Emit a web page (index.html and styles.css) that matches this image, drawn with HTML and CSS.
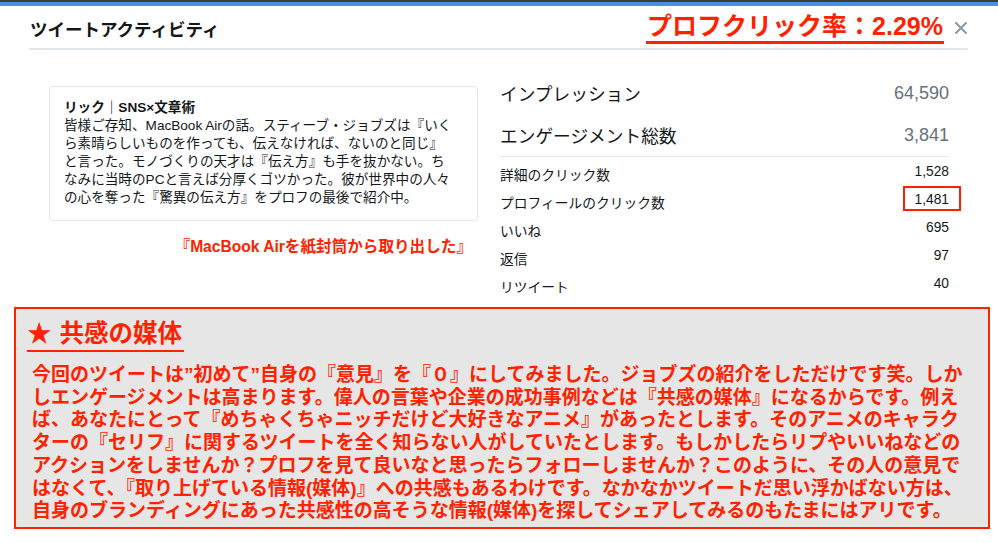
FILE: index.html
```html
<!DOCTYPE html>
<html lang="ja">
<head>
<meta charset="utf-8">
<title>ツイートアクティビティ</title>
<link rel="stylesheet" href="styles.css">
</head>
<body>
<div class="topbar"></div>
<div class="bluebar"></div>
<div class="modal">
  <div class="header">
    <h1 class="title">ツイートアクティビティ</h1>
    <div class="rate">プロフクリック率：2.29%</div>
    <svg class="close" width="12" height="12" viewBox="0 0 12 12"><path d="M1 1 L11 11 M11 1 L1 11" stroke="#8899a6" stroke-width="2" stroke-linecap="square"/></svg>
  </div>
  <div class="content">
    <div class="left">
      <div class="card">
        <div class="card-title">リック｜SNS×文章術</div>
        <div class="card-body">
          <span class="ln">皆様ご存知、MacBook Airの話。スティーブ・ジョブズは『いく</span>
          <span class="ln">ら素晴らしいものを作っても、伝えなければ、ないのと同じ』</span>
          <span class="ln">と言った。モノづくりの天才は『伝え方』も手を抜かない。ち</span>
          <span class="ln">なみに当時のPCと言えば分厚くゴツかった。彼が世界中の人々</span>
          <span class="ln">の心を奪った『驚異の伝え方』をプロフの最後で紹介中。</span>
        </div>
      </div>
      <div class="caption">『MacBook Airを紙封筒から取り出した』</div>
    </div>
    <div class="right">
      <div class="big-row"><span>インプレッション</span><span class="big-num">64,590</span></div>
      <div class="big-row"><span>エンゲージメント総数</span><span class="big-num">3,841</span></div>
      <div class="small-rows">
        <div class="small-row"><span>詳細のクリック数</span><span class="num">1,528</span></div>
        <div class="small-row highlight"><span>プロフィールのクリック数</span><span class="num">1,481</span><span class="mark"></span></div>
        <div class="small-row"><span>いいね</span><span class="num">695</span></div>
        <div class="small-row"><span>返信</span><span class="num">97</span></div>
        <div class="small-row"><span>リツイート</span><span class="num">40</span></div>
      </div>
    </div>
  </div>
</div>
<div class="note">
  <div class="note-title"><span class="star">★</span>共感の媒体</div>
  <div class="note-body">
    <span class="ln">今回のツイートは”初めて”自身の『意見』を『０』にしてみました。ジョブズの紹介をしただけです笑。しか</span>
    <span class="ln">しエンゲージメントは高まります。偉人の言葉や企業の成功事例などは『共感の媒体』になるからです。例え</span>
    <span class="ln">ば、あなたにとって『めちゃくちゃニッチだけど大好きなアニメ』があったとします。そのアニメのキャラク</span>
    <span class="ln">ターの『セリフ』に関するツイートを全く知らない人がしていたとします。もしかしたらリプやいいねなどの</span>
    <span class="ln">アクションをしませんか？プロフを見て良いなと思ったらフォローしませんか？このように、その人の意見で</span>
    <span class="ln">はなくて、『取り上げている情報(媒体)』への共感もあるわけです。なかなかツイートだ思い浮かばない方は、</span>
    <span class="ln">自身のブランディングにあった共感性の高そうな情報(媒体)を探してシェアしてみるのもたまにはアリです。</span>
  </div>
</div>
</body>
</html>
```

FILE: styles.css
```css
* { box-sizing: border-box; }
html, body { margin: 0; padding: 0; background: #ffffff; }
body {
  font-family: "Liberation Sans", "Noto Sans CJK JP", sans-serif;
  color: #14171a;
  width: 998px;
  height: 543px;
  overflow: hidden;
}
.topbar { height: 2px; background: #3d3d3d; }
.bluebar { height: 4px; background: #4a90e2; }

.modal { padding: 0 30px 0 29px; }
.header {
  display: flex;
  align-items: flex-start;
  height: 44px;
  border-bottom: 2px solid #e1e8ed;
}
.title {
  margin: 14px 0 0 1px;
  font-size: 17.5px;
  line-height: 20px;
  font-weight: bold;
  color: #14171a;
}
.rate {
  margin: 5px 0 0 auto;
  font-size: 25px;
  line-height: 30px;
  font-weight: bold;
  color: #ff2200;
  border-bottom: 3px solid #ff2200;
  padding: 0 1px;
}
.close { margin: 16px 1px 0 11px; flex: none; }

.content {
  display: flex;
  padding: 0 19px 0 20px;
}
.left { width: 429px; padding-top: 36px; }
.card {
  border: 1px solid #e1e8ed;
  border-radius: 4px;
  padding: 12px 14px 13px;
  font-size: 13.6px;
  line-height: 18px;
}
.card-title { font-weight: bold; }
.ln { display: block; white-space: nowrap; }
.caption {
  margin: 16px 6px 0 0;
  text-align: right;
  font-size: 15.6px;
  line-height: 20px;
  font-weight: bold;
  color: #ff2200;
}

.right { width: 449px; margin-left: auto; padding-top: 22px; }
.big-row {
  display: flex;
  justify-content: space-between;
  align-items: center;
  height: 42px;
  font-size: 17.7px;
  color: #14171a;
}
.big-num { color: #66707a; font-size: 18px; }
.small-rows { border-top: 1px solid #e1e8ed; padding-top: 3px; }
.small-row {
  position: relative;
  display: flex;
  justify-content: space-between;
  align-items: center;
  height: 28px;
  font-size: 13.75px;
}
.num { font-size: 13.75px; margin-top: -6px; }
.mark {
  position: absolute;
  right: -12px;
  top: -2px;
  width: 58px;
  height: 25px;
  border: 2px solid #ff2200;
}

.note {
  margin: 7px 8px 0 14px;
  border: 2px solid #ff2200;
  background: #e6e6e6;
  padding: 10px 8px 4px 11px;
  color: #ff2200;
  font-weight: bold;
}
.note-title {
  display: inline-block;
  font-size: 24.5px;
  line-height: 30px;
  padding-right: 2px;
  padding-bottom: 1px;
  border-bottom: 2px solid #ff2200;
}
.star { margin-right: 8px; }
.note-body {
  margin: 12px 0 0 5px;
  font-size: 19px;
  line-height: 22.7px;
}
```
